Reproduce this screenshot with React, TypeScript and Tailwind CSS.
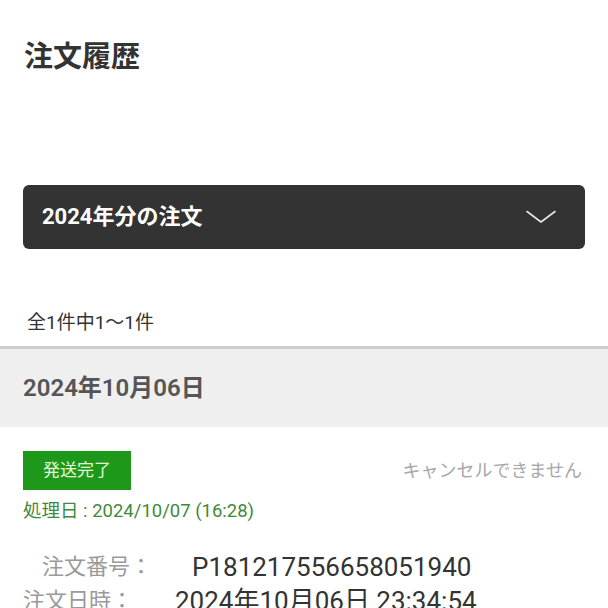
import React from "react";

const font = { fontFamily: 'Roboto, "Noto Sans CJK JP", sans-serif' };

export default function App() {
  return (
    <div className="w-[608px] h-[608px] overflow-hidden bg-white" style={font}>
      <div className="h-[185px] pt-[38px] pl-[24px]">
        <h1 className="text-[29px] leading-[38px] font-bold text-[#333]">注文履歴</h1>
      </div>

      <div className="mx-[23px] h-[64px] rounded-[6px] bg-[#333] flex items-center justify-between pl-[19px] pr-[29px]">
        <span className="text-[22px] font-bold text-white leading-none">2024年分の注文</span>
        <svg width="30" height="14" viewBox="0 0 30 14" fill="none">
          <path
            d="M1 1.5 L15 12 L29 1.5"
            stroke="#e6e6e6"
            strokeWidth="1.6"
            strokeLinecap="round"
            strokeLinejoin="round"
          />
        </svg>
      </div>

      <div className="h-[97px] flex items-end pb-[10px] pl-[27px]">
        <span className="text-[19px] leading-[26px] text-[#333]">全1件中1〜1件</span>
      </div>

      <div className="border-t-[3px] border-[#cdcdcd] bg-[#efefef] h-[81px] flex items-center pl-[23px]">
        <span className="text-[24px] font-semibold text-[#555] leading-none">2024年10月06日</span>
      </div>

      <div className="px-[23px] pt-[24px]">
        <div className="flex items-center justify-between">
          <div className="w-[108px] h-[39px] bg-[#1e981a] flex items-center justify-center">
            <span className="text-[17px] text-[#e4f8d8] leading-none">発送完了</span>
          </div>
          <span className="text-[18px] text-[#a8a8a8] mr-[3px]">キャンセルできません</span>
        </div>
        <div className="mt-[8px] text-[18.5px] leading-[26px] text-[#3f8a3a]">
          処理日 : 2024/10/07 (16:28)
        </div>

        <div className="mt-[26px] flex items-center h-[34px]">
          <span className="ml-[19px] w-[150px] text-[22px] text-[#9a9a9a] leading-none">注文番号：</span>
          <span className="text-[26px] text-[#333] leading-none">P181217556658051940</span>
        </div>
        <div className="flex items-center h-[34px]">
          <span className="w-[152px] text-[22px] text-[#9a9a9a] leading-none">注文日時：</span>
          <span className="text-[26px] text-[#333] leading-none">2024年10月06日 23:34:54</span>
        </div>
      </div>
    </div>
  );
}
